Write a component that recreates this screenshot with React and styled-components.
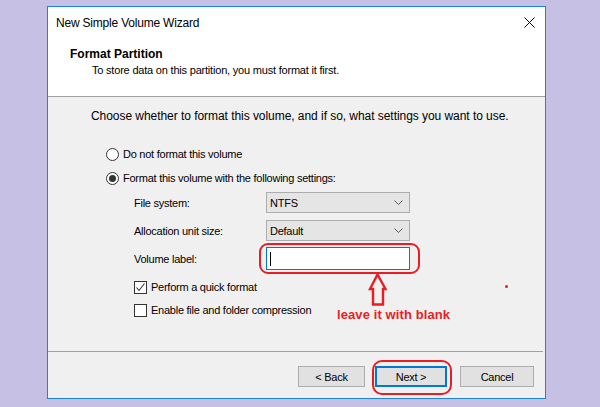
import styled, { createGlobalStyle } from 'styled-components'

const GlobalStyle = createGlobalStyle`
    html, body {
        margin: 0;
        padding: 0;
        background: #c7c0e5;
    }
    body {
        font-family: "Liberation Sans", Arial, sans-serif;
        font-size: 11px;
        letter-spacing: -0.25px;
        color: #000;
    }
`

function Chevron() {
    return (
        <svg width="9" height="5" viewBox="0 0 9 5">
            <path d="M0.5 0.5 L4.5 4.5 L8.5 0.5" fill="none" stroke="#5a5a5a" strokeWidth="1" />
        </svg>
    )
}

function App() {
    return (
        <Page>
            <GlobalStyle />
            <Window>
                <Header>
                    <TitleBar>
                        <Title>New Simple Volume Wizard</Title>
                        <CloseButton>
                            <svg width="11" height="11" viewBox="0 0 11 11">
                                <path d="M0.5 0.5 L10.5 10.5 M10.5 0.5 L0.5 10.5" stroke="#000" strokeWidth="1" />
                            </svg>
                        </CloseButton>
                    </TitleBar>
                    <PageTitle>Format Partition</PageTitle>
                    <PageSubtitle>To store data on this partition, you must format it first.</PageSubtitle>
                </Header>

                <Content>
                    <Intro>Choose whether to format this volume, and if so, what settings you want to use.</Intro>
                    <Options>
                        <OptionRow>
                            <Radio />
                            <span>Do not format this volume</span>
                        </OptionRow>
                        <OptionRow $gap={8}>
                            <Radio $checked />
                            <span>Format this volume with the following settings:</span>
                        </OptionRow>
                    </Options>

                    <Settings>
                        <FieldLabel>File system:</FieldLabel>
                        <Combo>NTFS<Chevron /></Combo>
                        <FieldLabel>Allocation unit size:</FieldLabel>
                        <Combo>Default<Chevron /></Combo>
                        <FieldLabel>Volume label:</FieldLabel>
                        <TextBox>
                            <Caret />
                            <Ring $top={-5} $left={-8} $w={161} $h={31} />
                            <Arrow>
                                <svg width="20" height="34" viewBox="0 0 20 34">
                                    <path d="M9.5 1.5 L2 16 L5 16 L5 31.5 L15 31.5 L15 16 L17.5 16 Z" fill="none" stroke="#ec1c24" strokeWidth="2.4" strokeLinejoin="miter" />
                                </svg>
                            </Arrow>
                            <Note>leave it with blank</Note>
                        </TextBox>
                    </Settings>

                    <Checks>
                        <OptionRow>
                            <CheckBox>
                                <svg width="11" height="11" viewBox="0 0 11 11">
                                    <path d="M1.5 5.5 L4 8.5 L9.5 1.5" fill="none" stroke="#333" strokeWidth="1.1" />
                                </svg>
                            </CheckBox>
                            <span>Perform a quick format</span>
                        </OptionRow>
                        <OptionRow $gap={7}>
                            <CheckBox />
                            <span>Enable file and folder compression</span>
                        </OptionRow>
                    </Checks>
                    <Dot />
                </Content>

                <Footer>
                    <Button $w={67}>&lt; Back</Button>
                    <Button $w={72} $space={2} $primary>
                        Next &gt;
                        <Ring $top={-8} $left={-5} $w={80} $h={35} $r={10} />
                    </Button>
                    <Button $w={74} $space={5}>Cancel</Button>
                </Footer>
            </Window>
        </Page>
    )
}

const Page = styled.div`
    padding: 6px 0 0 47px;
    height: 401px;
`

const Window = styled.div`
    width: 497px;
    height: 391px;
    border: 1px solid #1883d7;
    background: #f0f0f0;
    display: flex;
    flex-direction: column;
`

const Header = styled.div`
    background: #fff;
    height: 90px;
    border-bottom: 1px solid #a0a0a0;
    box-sizing: border-box;
`

const TitleBar = styled.div`
    display: flex;
    align-items: center;
    justify-content: space-between;
    height: 30px;
    padding: 2px 10px 0 8px;
    box-sizing: border-box;
`

const Title = styled.div`
    font-size: 12px;
    letter-spacing: -0.2px;
`

const CloseButton = styled.div`
    display: flex;
    align-items: center;
    margin-top: -2px;
`

const PageTitle = styled.div`
    font-weight: bold;
    font-size: 12px;
    letter-spacing: 0;
    padding-left: 22px;
    margin-top: 9px;
    line-height: 16px;
`

const PageSubtitle = styled.div`
    padding-left: 44px;
    line-height: 16px;
    letter-spacing: -0.2px;
`

const Content = styled.div`
    position: relative;
    flex: 1;
    padding: 11px 0 0 43px;
    border-bottom: 1px solid #a0a0a0;
    margin-right: 2px;
`

const Intro = styled.div`
    font-size: 12px;
    letter-spacing: -0.05px;
    line-height: 16px;
`

const Options = styled.div`
    margin: 22px 0 0 15px;
`

const OptionRow = styled.div`
    display: flex;
    align-items: center;
    gap: 4px;
    height: 16px;
    margin-top: ${p => p.$gap || 0}px;
`

const Radio = styled.span`
    width: 11px;
    height: 11px;
    border: 1px solid #333;
    border-radius: 50%;
    background: #fff;
    display: inline-flex;
    align-items: center;
    justify-content: center;
    &::after {
        content: '';
        width: 7px;
        height: 7px;
        border-radius: 50%;
        background: #333;
        display: ${p => (p.$checked ? 'block' : 'none')};
    }
`

const Settings = styled.div`
    display: grid;
    grid-template-columns: 132px 144px;
    row-gap: 7px;
    align-items: center;
    margin: 6px 0 0 43px;
`

const FieldLabel = styled.div`
    line-height: 16px;
`

const Combo = styled.div`
    height: 19px;
    border: 1px solid #adadad;
    background: #e5e5e5;
    display: flex;
    align-items: center;
    justify-content: space-between;
    padding: 0 6px 0 3px;
`

const TextBox = styled.div`
    position: relative;
    height: 21px;
    border: 1px solid #0078d7;
    background: #fff;
    margin-top: -1px;
    display: flex;
    align-items: center;
    padding-left: 3px;
`

const Caret = styled.span`
    width: 1px;
    height: 14px;
    background: #000;
`

const Ring = styled.span`
    position: absolute;
    top: ${p => p.$top}px;
    left: ${p => p.$left}px;
    width: ${p => p.$w}px;
    height: ${p => p.$h}px;
    box-sizing: border-box;
    border: 2.5px solid #ec1c24;
    border-radius: ${p => p.$r || 9}px;
    pointer-events: none;
`

const Arrow = styled.span`
    position: absolute;
    top: 25px;
    left: 101px;
    line-height: 0;
`

const Note = styled.span`
    position: absolute;
    top: 59px;
    left: 70px;
    white-space: nowrap;
    color: #ec1c24;
    font-weight: bold;
    font-size: 13px;
    letter-spacing: 0.1px;
`

const Checks = styled.div`
    margin: 9px 0 0 43px;
`

const CheckBox = styled.span`
    width: 11px;
    height: 11px;
    border: 1px solid #333;
    background: #fff;
    display: inline-flex;
    align-items: center;
    justify-content: center;
`

const Dot = styled.span`
    position: absolute;
    left: 457px;
    top: 188px;
    width: 3px;
    height: 3px;
    border-radius: 50%;
    background: #ec1c24;
`

const Footer = styled.div`
    height: 46px;
    display: flex;
    justify-content: flex-end;
    align-items: flex-start;
    gap: 8px;
    padding: 14px 11px 0 0;
    box-sizing: border-box;
`

const Button = styled.div`
    position: relative;
    width: ${p => p.$w}px;
    height: 21px;
    box-sizing: border-box;
    border: ${p => (p.$primary ? '2px solid #0078d7' : '1px solid #adadad')};
    background: #e1e1e1;
    display: flex;
    align-items: center;
    justify-content: center;
    margin-left: ${p => p.$space || 0}px;
`

export default App
